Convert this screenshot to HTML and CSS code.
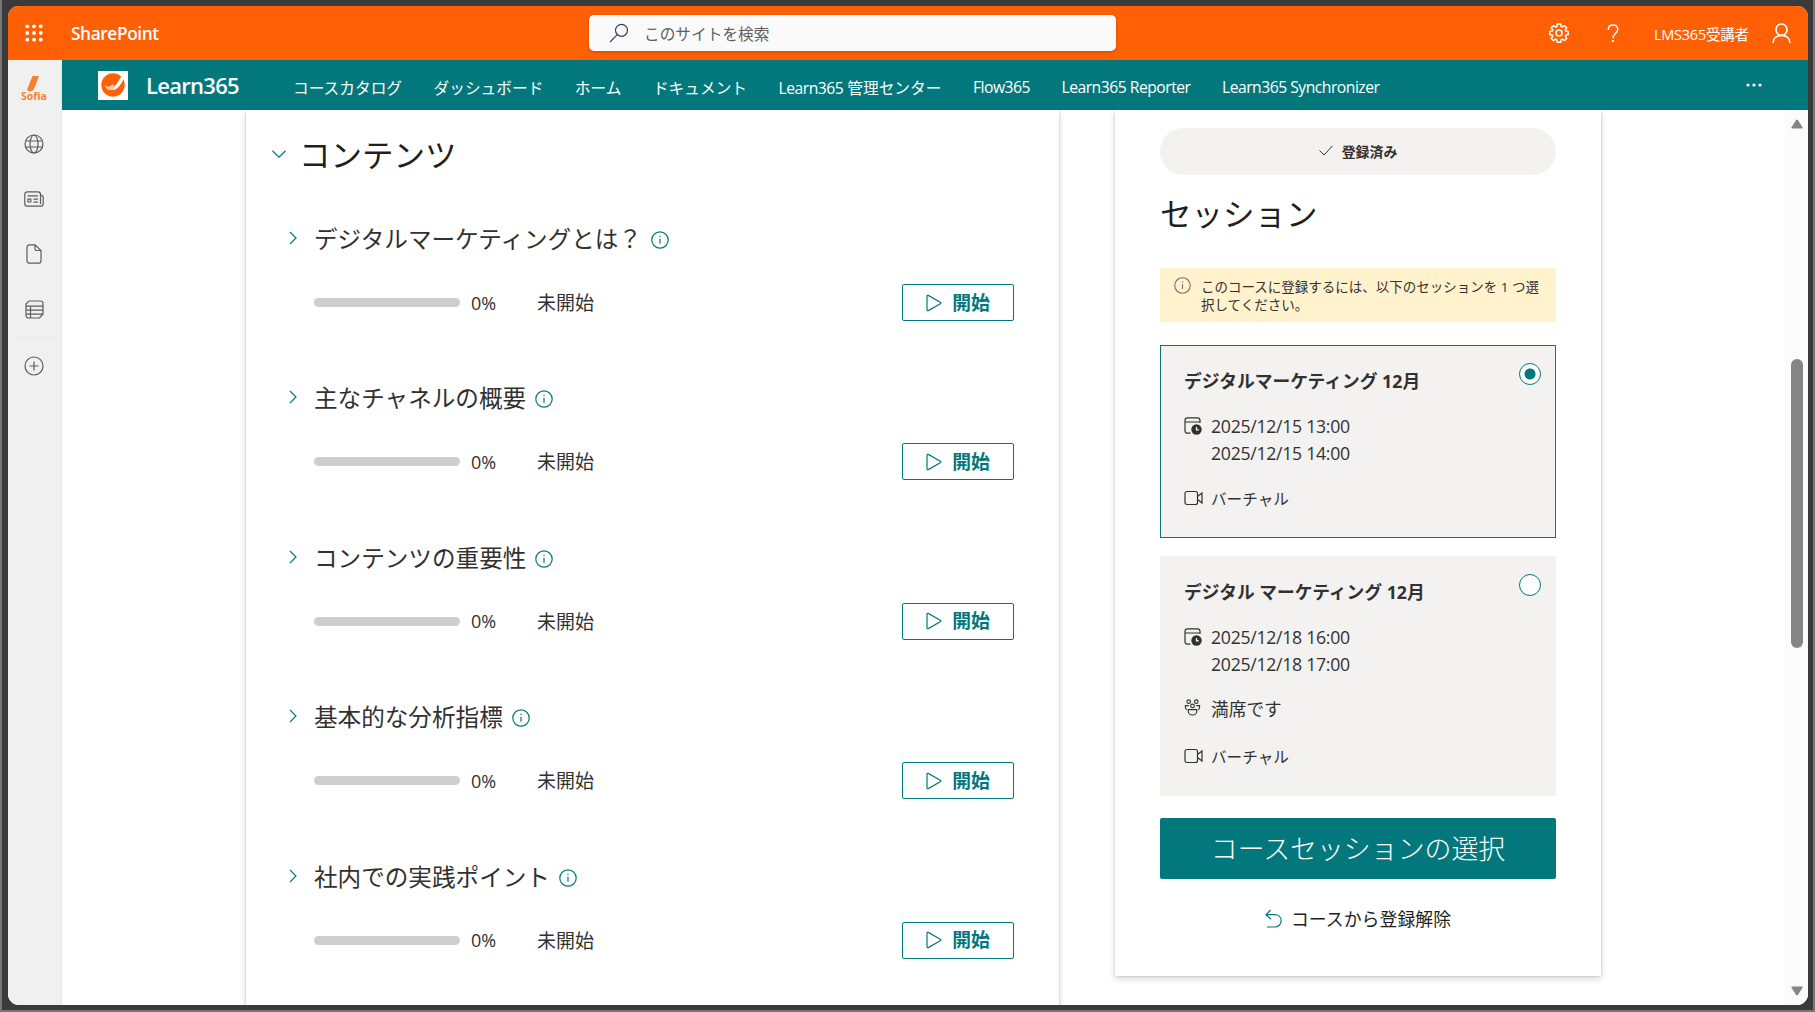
FILE: index.html
```html
<!DOCTYPE html>
<html lang="ja">
<head>
<meta charset="utf-8">
<title>Learn365</title>
<link rel="stylesheet" href="styles.css">
</head>
<body>
<svg class="defs" width="0" height="0">
  <symbol id="info" viewBox="0 0 18 18"><circle cx="9" cy="9" r="8.2"/><path d="M9 7.8v5M9 4.8v1.3"/></symbol>
  <symbol id="chev" viewBox="0 0 8 14"><path d="M1 1l6 6-6 6"/></symbol>
  <symbol id="play" viewBox="0 0 16 18"><path d="M1 2.2v13.6c0 .8.6 1.1 1.3.8l12-6.8c.7-.4.7-1.2 0-1.6l-12-6.8C1.600 1.100 1 1.400 1 2.200z"/></symbol>
  <symbol id="video" viewBox="0 0 20 16"><rect x="1" y="1.500" width="12.500" height="13" rx="2"/><path d="M13.500 6.500l4.500-3.500v10l-4.500-3.500"/></symbol>
  <symbol id="date" viewBox="0 0 18 18"><path d="M6.500 16.200H3.500A2.500 2.500 0 0 1 1 13.700V3.300A2.500 2.500 0 0 1 3.500.8h10A2.500 2.500 0 0 1 16 3.300V6M1 5h15"/><circle class="solid" cx="12.500" cy="12.500" r="5.200"/><path class="hand" d="M12.500 10v2.800h2.300"/></symbol>
</svg>
<div class="window">
  <header class="suite">
    <svg class="waffle" viewBox="0 0 18 18"><circle cx="2.300" cy="2.300" r="1.900"/><circle cx="9" cy="2.300" r="1.900"/><circle cx="15.700" cy="2.300" r="1.900"/><circle cx="2.300" cy="9" r="1.900"/><circle cx="9" cy="9" r="1.900"/><circle cx="15.700" cy="9" r="1.900"/><circle cx="2.300" cy="15.700" r="1.900"/><circle cx="9" cy="15.700" r="1.900"/><circle cx="15.700" cy="15.700" r="1.900"/></svg>
    <span class="app">SharePoint</span>
    <div class="search">
      <svg viewBox="0 0 20 20"><circle cx="12.500" cy="7.300" r="6"/><path d="M8.300 11.700L1 19"/></svg>
      <span>このサイトを検索</span>
    </div>
    <div class="tools">
      <svg class="gear" viewBox="0 0 20 20"><path d="M8.300 1h3.400l.5 2.500 1.100.5 2.200-1.400 2.200 2.200-1.400 2.200.5 1.100 2.400.5v3l-2.400.5-.5 1.100 1.400 2.200-2.200 2.200-2.200-1.400-1.100.5-.5 2.500H8.300l-.5-2.500-1.100-.5-2.200 1.400-2.200-2.200 1.400-2.200-.5-1.100L.8 11.600v-3l2.400-.5.5-1.100-1.400-2.200 2.200-2.200L6.700 4l1.100-.5z"/><circle cx="10" cy="10" r="3"/></svg>
      <svg class="help" viewBox="0 0 12 20"><path d="M1 6C1 3 3 1 6 1s5 2 5 4.700c0 3.600-5 4.600-5 9.300"/><circle cx="6" cy="18" r=".5"/></svg>
      <span class="user">LMS365受講者</span>
      <svg class="person" viewBox="0 0 20 22"><ellipse cx="10" cy="7" rx="5.800" ry="6"/><path d="M1 21c.3-5 4-8 9-8s8.700 3 9 8"/></svg>
    </div>
  </header>
  <div class="body">
    <aside class="rail">
      <div class="cell brand"><svg viewBox="0 0 24 16"><path d="M10.500 0h6.500L12.500 12c-1.500 4.500-8.500 4-7 .5z"/></svg><span>Sofia</span></div>
      <div class="cell"><svg width="20" height="20" viewBox="0 0 20 20"><circle cx="10" cy="10" r="9"/><ellipse cx="10" cy="10" rx="4" ry="9"/><path d="M1.600 7h16.800M1.600 13h16.800"/></svg></div>
      <div class="cell"><svg width="20" height="16" viewBox="0 0 20 16"><path d="M16.500 13V3.200A2.500 2.500 0 0 0 14 .8H3.300A2.500 2.500 0 0 0 .8 3.300v9.400a2.500 2.500 0 0 0 2.500 2.500h13.400a2.500 2.500 0 0 0 2.500-2.500V6.500a2.500 2.500 0 0 0-2.700-2.400M3.500 4.900h10.500M9.500 8.100h4.500M9.500 11.200h4.500M4 8.200h2.800v2.800H4z"/></svg></div>
      <div class="cell"><svg width="16" height="20" viewBox="0 0 16 20"><path d="M9 .8H3.500A2.500 2.500 0 0 0 1 3.300v13.400a2.500 2.500 0 0 0 2.500 2.500h9a2.500 2.500 0 0 0 2.500-2.500V6.500zM9 .8V5a1.500 1.500 0 0 0 1.500 1.500H15"/></svg></div>
      <div class="cell"><svg width="19" height="19" viewBox="0 0 19 19"><path d="M4 1h11.500A2.500 2.500 0 0 1 18 3.500V14l-3.500 4H3.500A2.500 2.500 0 0 1 1 15.500V4zM1 6.200h17M1 10.200h17M1 14.200h17M5.500 6.200V18"/></svg></div>
      <hr class="rule">
      <div class="cell"><svg width="20" height="20" viewBox="0 0 20 20"><circle cx="10" cy="10" r="9"/><path d="M10 5.500v9M5.500 10h9"/></svg></div>
    </aside>
    <div class="site">
      <nav class="nav">
        <div class="logo"><svg viewBox="0 0 24 24"><circle class="disc" cx="12" cy="12" r="11.700"/><path class="swoosh" d="M22.500 0L16 10.500c-1.500 2.500-4 4.500-7 4.500-2 0-4-1-5-2.500 1 4 8 7 13 2 3-3 5-6.500 7-12z"/><path class="tint" d="M4 12.500c3 2.500 6 0 8.500-1.500l1.500 4c-4 4-9 2-10-2.500z"/></svg></div>
        <span class="site-name">Learn365</span>
        <div class="links">
          <a>コースカタログ</a><a>ダッシュボード</a><a>ホーム</a><a>ドキュメント</a><a><span class="latin">Learn365</span> 管理センター</a><a class="latin">Flow365</a><a class="latin">Learn365 Reporter</a><a class="latin">Learn365 Synchronizer</a>
        </div>
        <svg class="more" viewBox="0 0 16 4"><circle cx="2" cy="2" r="1.600"/><circle cx="8" cy="2" r="1.600"/><circle cx="14" cy="2" r="1.600"/></svg>
      </nav>
      <div class="view">
        <main class="panel content">
          <h2 class="head"><svg viewBox="0 0 14 8"><path d="M.5.8L7 7.200 13.500.8"/></svg>コンテンツ</h2>
          <section class="item">
            <h3><svg class="chev"><use href="#chev"/></svg>デジタルマーケティングとは？<svg class="info"><use href="#info"/></svg></h3>
            <div class="row"><i class="bar"></i><span class="pct">0%</span><span class="state">未開始</span><button class="start"><svg><use href="#play"/></svg><span>開始</span></button></div>
          </section>
          <section class="item">
            <h3><svg class="chev"><use href="#chev"/></svg>主なチャネルの概要<svg class="info"><use href="#info"/></svg></h3>
            <div class="row"><i class="bar"></i><span class="pct">0%</span><span class="state">未開始</span><button class="start"><svg><use href="#play"/></svg><span>開始</span></button></div>
          </section>
          <section class="item">
            <h3><svg class="chev"><use href="#chev"/></svg>コンテンツの重要性<svg class="info"><use href="#info"/></svg></h3>
            <div class="row"><i class="bar"></i><span class="pct">0%</span><span class="state">未開始</span><button class="start"><svg><use href="#play"/></svg><span>開始</span></button></div>
          </section>
          <section class="item">
            <h3><svg class="chev"><use href="#chev"/></svg>基本的な分析指標<svg class="info"><use href="#info"/></svg></h3>
            <div class="row"><i class="bar"></i><span class="pct">0%</span><span class="state">未開始</span><button class="start"><svg><use href="#play"/></svg><span>開始</span></button></div>
          </section>
          <section class="item">
            <h3><svg class="chev"><use href="#chev"/></svg>社内での実践ポイント<svg class="info"><use href="#info"/></svg></h3>
            <div class="row"><i class="bar"></i><span class="pct">0%</span><span class="state">未開始</span><button class="start"><svg><use href="#play"/></svg><span>開始</span></button></div>
          </section>
        </main>
        <aside class="panel sessions">
          <div class="pill"><svg viewBox="0 0 14 11"><path d="M.5 5.500L5 10 13.500.8"/></svg>登録済み</div>
          <h2>セッション</h2>
          <div class="notice"><svg><use href="#info"/></svg><p>このコースに登録するには、以下のセッションを 1 つ選択してください。</p></div>
          <article class="card selected">
            <div class="title"><h4>デジタルマーケティング 12月</h4><i class="radio on"></i></div>
            <div class="line dates"><svg class="date"><use href="#date"/></svg><div>2025/12/15 13:00<br>2025/12/15 14:00</div></div>
            <div class="line virtual"><svg class="video"><use href="#video"/></svg>バーチャル</div>
          </article>
          <article class="card">
            <div class="title"><h4>デジタル マーケティング 12月</h4><i class="radio"></i></div>
            <div class="line dates"><svg class="date"><use href="#date"/></svg><div>2025/12/18 16:00<br>2025/12/18 17:00</div></div>
            <div class="line full"><svg class="people" viewBox="0 0 18 18"><circle cx="5" cy="2.800" r="1.900"/><circle cx="13" cy="2.800" r="1.900"/><circle cx="9" cy="7.300" r="1.900"/><path d="M4.500 11.200h9v1.700a4.500 4 0 0 1-9 0zM5 7H1.500v1.500c0 1.800.5 2.500 1.500 2.900M13 7h3.500v1.500c0 1.800-.5 2.500-1.500 2.900"/></svg>満席です</div>
            <div class="line virtual"><svg class="video"><use href="#video"/></svg>バーチャル</div>
          </article>
          <button class="choose">コースセッションの選択</button>
          <a class="leave"><svg viewBox="0 0 17 19"><path d="M5.500 1L1 5.700l5 4.500M1 5.700h8.500c4 0 6.700 2.600 6.700 6.100s-2.700 6.200-6.700 6.200H2"/></svg>コースから登録解除</a>
        </aside>
        <div class="scroll">
          <svg viewBox="0 0 12 10"><path d="M5 1.200a1.200 1.200 0 0 1 2 0l4.500 7c.4.800 0 1.300-.8 1.300H1.300c-.8 0-1.200-.5-.8-1.300z"/></svg>
          <i class="thumb"></i>
          <svg class="down" viewBox="0 0 12 10"><path d="M5 1.200a1.200 1.200 0 0 1 2 0l4.500 7c.4.800 0 1.300-.8 1.300H1.300c-.8 0-1.200-.5-.8-1.300z"/></svg>
        </div>
      </div>
    </div>
  </div>
</div>
</body>
</html>
```
FILE: styles.css
```css
* { box-sizing: border-box; }
body {
  margin: 0;
  width: 1815px;
  height: 1012px;
  padding: 6px 5px 5px 6px;
  background: #3b3b3b;
  border: solid #777;
  border-width: 0 2px 2px 2px;
  font-family: "Open Sans", "Noto Sans CJK JP", sans-serif;
  color: #323130;
  overflow: hidden;
}
.defs { position: absolute; }
svg { display: block; flex: none; fill: none; stroke: currentColor; stroke-width: 1.2; }
h2, h3, h4, p { margin: 0; font-weight: 400; }
button { font-family: inherit; padding: 0; }

.window { width: 1800px; height: 999px; border-radius: 11px; overflow: hidden; background: #fff; display: flex; flex-direction: column; }

.suite { height: 54px; flex: none; background: #ff5f05; color: #fff; display: flex; align-items: center; padding-left: 17px; }
.waffle { width: 18px; height: 18px; fill: #fff; stroke: none; }
.app { width: 518px; margin-left: 28px; font-size: 17.3px; font-weight: 600; letter-spacing: -.4px; }
.search { width: 527px; height: 36px; background: #fafafa; border-radius: 5px; box-shadow: 0 1px 3px rgba(0,0,0,.25); display: flex; align-items: center; padding-left: 20px; color: #616161; font-size: 15.700px; }
.search svg { width: 20px; height: 20px; margin-right: 15px; color: #33415c; }
.tools { flex: 1; display: flex; align-items: center; }
.gear { width: 20px; height: 20px; margin-left: 433px; stroke-width: 1.500; }
.help { width: 12px; height: 19px; margin-left: 38px; stroke-width: 1.500; }
.user { margin-left: 35px; width: 118px; font-size: 14.500px; letter-spacing: -.25px; white-space: nowrap; }
.person { width: 19px; height: 21px; stroke-width: 1.700; }

.body { flex: 1; display: flex; min-height: 0; }
.rail { width: 54px; background: #f0f0f0; border-right: 1px solid #e6e6e6; color: #5c5c5c; }
.cell { height: 55.300px; display: flex; align-items: center; justify-content: center; padding-right: 1px; }
.brand { flex-direction: column; height: 56px; color: #f58232; font-size: 10.500px; font-weight: 700; line-height: 9px; }
.brand svg { width: 24px; height: 16px; fill: #f58232; stroke: none; }
.rule { margin: 0 6px; border: 0; border-top: 1px solid #e8e8e8; }

.site { flex: 1; display: flex; flex-direction: column; min-width: 0; }
.nav { height: 50px; flex: none; background: #03787c; color: #fff; display: flex; align-items: center; padding-left: 36px; }
.logo { width: 30px; height: 29px; background: #fff; display: flex; align-items: center; justify-content: center; }
.logo svg { width: 24px; height: 24px; stroke: none; }
.disc { fill: #ff5f05; }
.swoosh { fill: #fff; }
.tint { fill: #ffc9a8; }
.site-name { width: 147px; margin-left: 18px; font-size: 22px; font-weight: 600; letter-spacing: -.7px; }
.links { width: 1453px; display: flex; gap: 31.500px; font-size: 15.700px; white-space: nowrap; padding-top: 4px; }
.latin { letter-spacing: -.5px; }
.more { width: 16px; height: 4px; fill: #fff; stroke: none; }

.view { flex: 1; min-height: 0; display: flex; align-items: flex-start; overflow: hidden; }
.panel { flex: none; background: #fff; box-shadow: 0 3px 7px rgba(0,0,0,.16), 0 0 2px rgba(0,0,0,.2); }
.content { width: 813px; height: 910px; margin-left: 184px; }
.head { height: 109px; padding: 0 0 24px 26px; display: flex; align-items: center; font-size: 31.500px; color: #201f1e; }
.head svg { width: 14px; height: 8px; margin: 2px 13px 0 0; color: #03787c; }
.item { height: 159.400px; padding: 0 45px 0 43px; color: #323130; }
.item h3 { height: 38px; display: flex; align-items: center; font-size: 23.600px; }
.chev { width: 8px; height: 14px; margin-right: 17px; color: #03787c; }
.info { width: 18px; height: 18px; margin: 4px 0 0 9px; color: #03787c; }
.row { height: 37px; margin-top: 27px; padding-left: 25px; display: flex; align-items: center; }
.bar { width: 146px; height: 9px; border-radius: 5px; background: #d0cecc; }
.pct { width: 66px; margin-left: 11px; font-size: 18px; }
.state { font-size: 19px; margin-top: -1px; }
.start { width: 112px; height: 37px; margin-left: auto; display: flex; align-items: center; justify-content: center; background: #fff; border: 1px solid #03787c; border-radius: 2px; color: #03787c; font-size: 18.800px; font-weight: 700; }
.start svg { width: 16px; height: 18px; margin-right: 10px; }
.start span { margin-top: -2px; }

.sessions { width: 486px; height: 866px; margin-left: 56px; padding: 18px 45px 0; }
.pill { height: 47px; padding-bottom: 2px; border-radius: 24px; background: #f3f2f1; display: flex; align-items: center; justify-content: center; font-size: 13.900px; font-weight: 700; }
.pill svg { width: 14px; height: 11px; margin-right: 9px; stroke-width: 1; }
.sessions h2 { height: 78px; line-height: 78px; font-size: 31.500px; color: #201f1e; }
.notice { height: 54px; margin-top: 15px; padding: 9px 14px; display: flex; background: #fff2cd; font-size: 13.500px; line-height: 18px; }
.notice p { padding-top: 1px; }
.notice svg { width: 17px; height: 17px; margin-right: 10px; color: #797775; }
.card { margin-top: 18px; height: 240px; padding: 1px; background: #f3f2f1; }
.selected { margin-top: 23px; height: 193px; padding: 0; border: 1px solid #03787c; }
.title { display: flex; justify-content: space-between; padding: 16px 14px 0 23px; }
.title h4 { font-size: 17.750px; line-height: 38px; font-weight: 700; }
.radio { width: 22px; height: 22px; border: 1px solid #03787c; border-radius: 50%; background: #fff; margin-top: 1px; }
.on { background: radial-gradient(circle, #03787c 5px, #fff 6px); }
.line { display: flex; padding-left: 23px; align-items: center; font-size: 17.700px; }
.dates { margin-top: 13px; align-items: flex-start; line-height: 27px; letter-spacing: -.3px; }
.date { width: 18px; height: 18px; margin: 4px 9px 0 0; }
.solid { fill: #323130; stroke: none; }
.hand { stroke: #fff; }
.full { margin-top: 14px; height: 31px; margin-bottom: 18px; }
.people { width: 17px; height: 17px; margin-right: 10px; }
.virtual { height: 30px; font-size: 15.600px; }
.dates + .virtual { margin-top: 16px; }
.video { width: 20px; height: 16px; margin-right: 7px; }
.choose { display: block; width: 100%; height: 61px; margin-top: 22px; padding-bottom: 2px; border: 0; border-radius: 2px; background: #03787c; color: #fff; font-size: 26.900px; font-weight: 300; }
.leave { margin-top: 22px; height: 34px; display: flex; align-items: center; justify-content: center; font-size: 17.900px; color: #201f1e; }
.leave svg { width: 17px; height: 19px; margin-right: 9px; color: #03787c; }

.scroll { width: 23px; height: 895px; margin-left: auto; background: #fbfbfb; display: flex; flex-direction: column; align-items: center; padding: 9px 0; color: #858585; }
.scroll svg { width: 12px; height: 10px; fill: currentColor; stroke: none; }
.scroll .down { transform: rotate(180deg); margin-top: auto; }
.thumb { width: 12px; height: 289px; margin-top: 230px; border-radius: 6px; background: #858585; }
```
